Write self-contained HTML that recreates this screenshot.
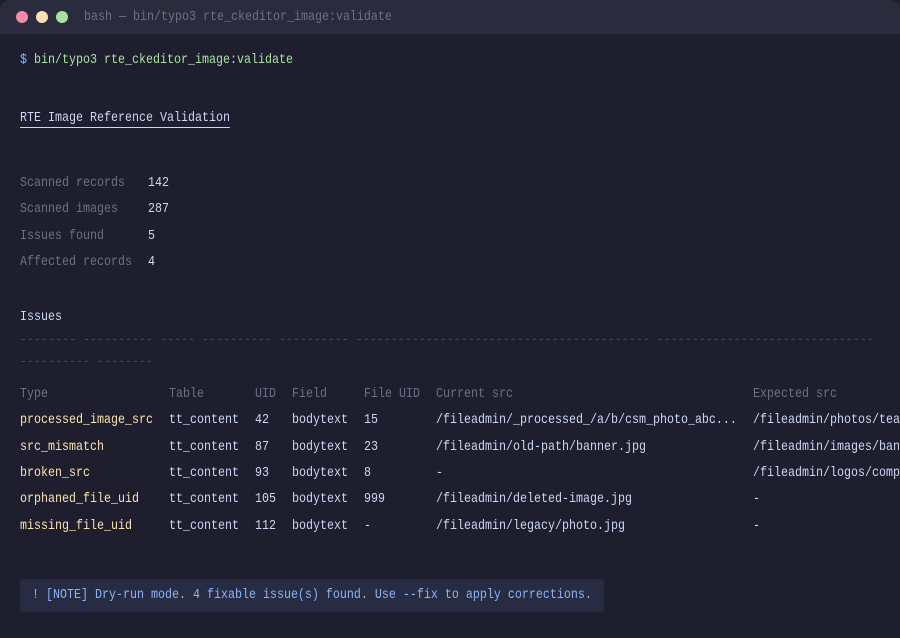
<!DOCTYPE html>
<html><head><meta charset="utf-8"><style>
*{margin:0;padding:0;box-sizing:border-box}
html,body{width:900px;height:638px;background:#1e1e2e;overflow:hidden}
.win{position:absolute;left:0;top:0;width:900px;height:638px;background:#1e1e2e;border-radius:10px 10px 0 0;overflow:hidden}
.bar{position:absolute;left:0;top:0;width:900px;height:34px;background:#2a2b3c}
.dot{position:absolute;top:11px;width:12px;height:12px;border-radius:50%}
.t{position:absolute;font-family:"Liberation Mono","DejaVu Sans Mono",monospace;font-size:14px;white-space:pre;line-height:16px;transform:scaleX(0.833);transform-origin:0 0}
.k{color:#6c7086}.v{color:#cdd6f4}.y{color:#f9e2af}.d{color:#45475a}
.note{position:absolute;left:20px;top:579px;width:584px;height:33px;background:#282c42;border-radius:3px}
</style></head><body><div class="win">
<div class="bar"></div>
<div class="dot" style="left:16px;background:#f38ba8"></div>
<div class="dot" style="left:36px;background:#f9e2af"></div>
<div class="dot" style="left:56px;background:#a6e3a1"></div>
<div class="t k" style="left:84px;top:9px">bash — bin/typo3 rte_ckeditor_image:validate</div>
<div class="t" style="left:20px;top:52px;color:#a6e3a1"><span style="color:#89b4fa">$</span> bin/typo3 rte_ckeditor_image:validate</div>
<div class="t v" style="left:20px;top:110px;border-bottom:1px solid #cdd6f4;padding-bottom:1px">RTE Image Reference Validation</div>
<div class="t k" style="left:20px;top:175px">Scanned records</div><div class="t v" style="left:148px;top:175px">142</div>
<div class="t k" style="left:20px;top:201px">Scanned images</div><div class="t v" style="left:148px;top:201px">287</div>
<div class="t k" style="left:20px;top:228px">Issues found</div><div class="t v" style="left:148px;top:228px">5</div>
<div class="t k" style="left:20px;top:254px">Affected records</div><div class="t v" style="left:148px;top:254px">4</div>
<div class="t v" style="left:20px;top:309px">Issues</div>
<div class="t d" style="left:20px;top:332px">-------- ---------- ----- ---------- ---------- ------------------------------------------ -------------------------------</div>
<div class="t d" style="left:20px;top:354px">---------- --------</div>

<div class="t k" style="left:20px;top:386px">Type</div>
<div class="t k" style="left:169px;top:386px">Table</div>
<div class="t k" style="left:255px;top:386px">UID</div>
<div class="t k" style="left:292px;top:386px">Field</div>
<div class="t k" style="left:364px;top:386px">File UID</div>
<div class="t k" style="left:436px;top:386px">Current src</div>
<div class="t k" style="left:753px;top:386px">Expected src</div>

<div class="t y" style="left:20px;top:412px">processed_image_src</div><div class="t v" style="left:169px;top:412px">tt_content</div><div class="t v" style="left:255px;top:412px">42</div><div class="t v" style="left:292px;top:412px">bodytext</div><div class="t v" style="left:364px;top:412px">15</div><div class="t v" style="left:436px;top:412px">/fileadmin/_processed_/a/b/csm_photo_abc...</div><div class="t v" style="left:753px;top:412px">/fileadmin/photos/team.jpg</div>

<div class="t y" style="left:20px;top:439px">src_mismatch</div><div class="t v" style="left:169px;top:439px">tt_content</div><div class="t v" style="left:255px;top:439px">87</div><div class="t v" style="left:292px;top:439px">bodytext</div><div class="t v" style="left:364px;top:439px">23</div><div class="t v" style="left:436px;top:439px">/fileadmin/old-path/banner.jpg</div><div class="t v" style="left:753px;top:439px">/fileadmin/images/banner.jpg</div>

<div class="t y" style="left:20px;top:465px">broken_src</div><div class="t v" style="left:169px;top:465px">tt_content</div><div class="t v" style="left:255px;top:465px">93</div><div class="t v" style="left:292px;top:465px">bodytext</div><div class="t v" style="left:364px;top:465px">8</div><div class="t v" style="left:436px;top:465px">-</div><div class="t v" style="left:753px;top:465px">/fileadmin/logos/company.png</div>

<div class="t y" style="left:20px;top:491px">orphaned_file_uid</div><div class="t v" style="left:169px;top:491px">tt_content</div><div class="t v" style="left:255px;top:491px">105</div><div class="t v" style="left:292px;top:491px">bodytext</div><div class="t v" style="left:364px;top:491px">999</div><div class="t v" style="left:436px;top:491px">/fileadmin/deleted-image.jpg</div><div class="t v" style="left:753px;top:491px">-</div>

<div class="t y" style="left:20px;top:518px">missing_file_uid</div><div class="t v" style="left:169px;top:518px">tt_content</div><div class="t v" style="left:255px;top:518px">112</div><div class="t v" style="left:292px;top:518px">bodytext</div><div class="t v" style="left:364px;top:518px">-</div><div class="t v" style="left:436px;top:518px">/fileadmin/legacy/photo.jpg</div><div class="t v" style="left:753px;top:518px">-</div>

<div class="note"></div>
<div class="t" style="left:32px;top:587px;color:#89b4fa">! [NOTE] Dry-run mode. 4 fixable issue(s) found. Use --fix to apply corrections.</div>
</div></body></html>
